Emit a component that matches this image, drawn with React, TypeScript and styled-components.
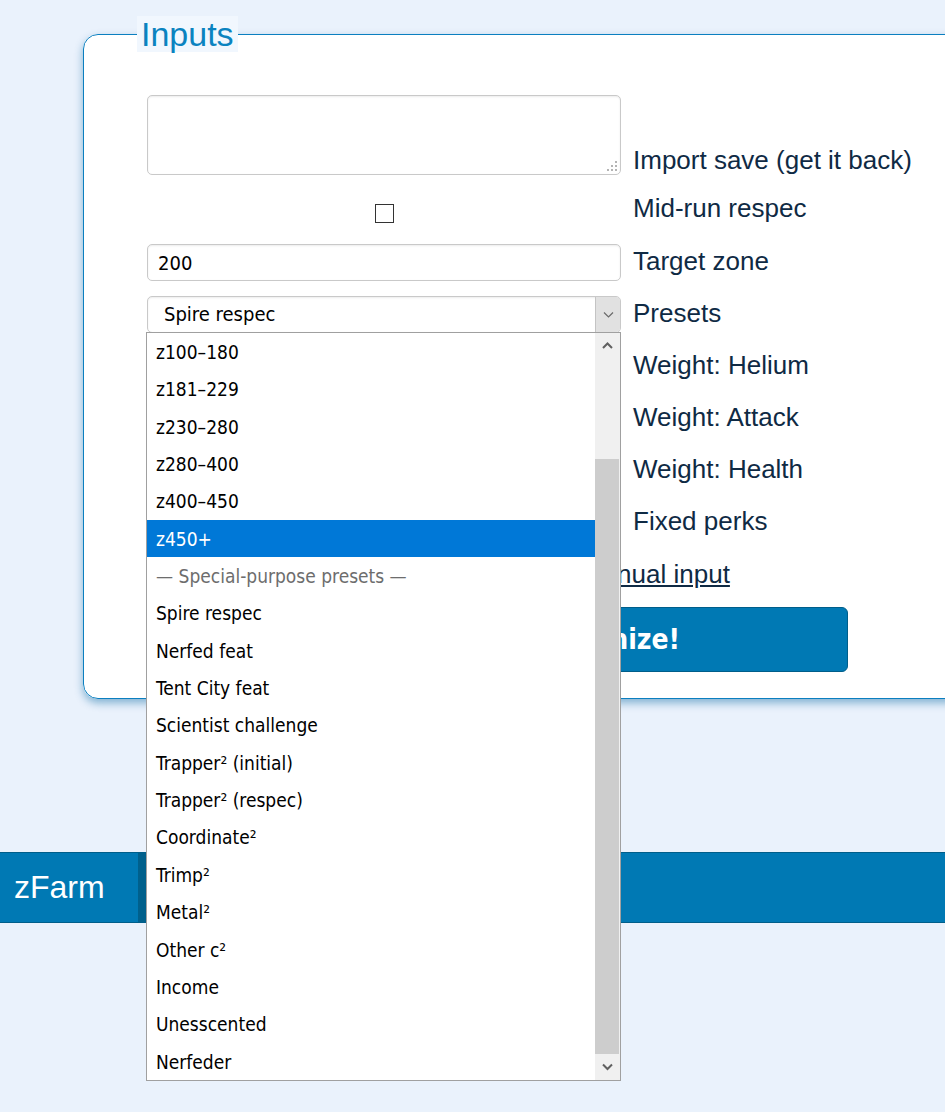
import React from 'react';
import styled, { createGlobalStyle } from 'styled-components';

const GlobalStyle = createGlobalStyle`
  html, body {
    margin: 0;
    padding: 0;
  }
  html {
    overflow: hidden;
  }
  body {
    background: #eaf2fc;
    font-family: "Liberation Sans", Arial, sans-serif;
    color: #0f2a44;
  }
`;

const uiFont = `"DejaVu Sans Condensed", "DejaVu Sans", sans-serif`;

// small square of the textarea's resize grip
const gripDot = (right: number, bottom: number) =>
  `linear-gradient(#b4b4b4, #b4b4b4) no-repeat right ${right}px bottom ${bottom}px / 2px 2px`;

const Page = styled.div`
  min-height: 1112px;
  padding-top: 16px;
  box-sizing: border-box;
`;

const Panel = styled.fieldset`
  margin: 0 0 153px 83px;
  width: 1100px;
  min-width: 0;
  box-sizing: border-box;
  padding: 43px 63px 26px;
  border: 1px solid #0b7fc0;
  border-radius: 15px;
  background: #fff;
  box-shadow: 0 4px 8px rgba(0, 100, 160, 0.45);
`;

const Legend = styled.legend`
  margin-left: -10px;
  padding: 0 4px;
  font-size: 34px;
  line-height: 36px;
  color: #0b83c0;
  background: #f1f7fe;
`;

const Form = styled.div`
  display: grid;
  grid-template-columns: 474px auto;
  column-gap: 12px;
  row-gap: 15px;
  align-items: center;
`;

const FieldLabel = styled.label<{ $bottom?: boolean }>`
  font-size: 26px;
  white-space: nowrap;
  color: #0f2a44;
  line-height: ${(p) => (p.$bottom ? '36px' : '31px')};
  align-self: ${(p) => (p.$bottom ? 'end' : 'center')};
  margin-bottom: ${(p) => (p.$bottom ? '-3px' : '3px')};
`;

const SaveBox = styled.textarea`
  display: block;
  width: 474px;
  height: 80px;
  box-sizing: border-box;
  border: 1px solid #c9c9c9;
  border-radius: 5px;
  box-shadow: inset 0 1px 2px rgba(0, 0, 0, 0.08);
  resize: none;
  background: ${[
    gripDot(3, 3),
    gripDot(7, 3),
    gripDot(11, 3),
    gripDot(3, 7),
    gripDot(7, 7),
    gripDot(3, 11),
  ].join(', ')}, #fff;
`;

const CheckCell = styled.div`
  height: 39px;
  display: flex;
  justify-content: center;
  align-items: flex-start;
`;

const CheckBox = styled.input`
  appearance: none;
  margin: 14px 0 0;
  width: 19px;
  height: 19px;
  box-sizing: border-box;
  border: 1px solid #333;
  background: #fff;
`;

const TextField = styled.input`
  display: block;
  width: 474px;
  height: 37px;
  box-sizing: border-box;
  padding: 0 10px;
  border: 1px solid #c9c9c9;
  border-radius: 5px;
  box-shadow: inset 0 1px 2px rgba(0, 0, 0, 0.08);
  font-family: ${uiFont};
  font-stretch: condensed;
  font-size: 20px;
  color: #000;
`;

const SelectCell = styled.div`
  position: relative;
`;

const SelectShell = styled.div`
  display: flex;
  height: 37px;
  box-sizing: border-box;
  border: 1px solid #c9c9c9;
  border-radius: 5px;
  overflow: hidden;
  background: #fff;
  box-shadow: inset 0 1px 2px rgba(0, 0, 0, 0.08);
`;

const SelectValue = styled.div`
  flex: 1;
  padding-left: 16px;
  font-family: ${uiFont};
  font-stretch: condensed;
  font-size: 20px;
  line-height: 35px;
  color: #000;
`;

const SelectArrow = styled.div`
  width: 24px;
  background: #e1e1e1;
  border-left: 1px solid #c4c4c4;
  display: flex;
  align-items: center;
  justify-content: center;
`;

const Popup = styled.div`
  position: absolute;
  top: calc(100% - 1px);
  left: -1px;
  width: 475px;
  box-sizing: border-box;
  border: 1px solid #a0a0a0;
  background: #fff;
  display: flex;
  z-index: 10;
`;

const OptionList = styled.div`
  flex: 1;
`;

const Option = styled.div<{ $selected?: boolean; $group?: boolean }>`
  height: 37.35px;
  line-height: 39px;
  padding-left: 9px;
  font-family: ${uiFont};
  font-stretch: condensed;
  font-size: 19px;
  white-space: nowrap;
  overflow: hidden;
  color: ${(p) => (p.$selected ? '#fff' : p.$group ? '#6d6d6d' : '#000')};
  background: ${(p) => (p.$selected ? '#0078d7' : 'transparent')};
`;

const ScrollBar = styled.div`
  width: 25px;
  display: flex;
  flex-direction: column;
  background: #f0f0f0;
`;

const ScrollCap = styled.div`
  height: 26px;
  display: flex;
  align-items: center;
  justify-content: center;
`;

const ScrollTrack = styled.div`
  flex: 1;
  display: flex;
  flex-direction: column;
  padding-top: 100px;
`;

const ScrollThumb = styled.div`
  flex: 1;
  background: #cdcdcd;
  margin-right: 1px;
`;

const ManualLink = styled.a`
  grid-column: 1 / -1;
  justify-self: start;
  margin-left: 434px;
  font-size: 26px;
  line-height: 36px;
  color: #0f2a44;
  text-decoration: underline;
`;

const OptimizeButton = styled.button`
  grid-column: 1 / -1;
  justify-self: start;
  margin-left: 227px;
  width: 474px;
  height: 65px;
  border: 1px solid #005e8a;
  border-radius: 6px;
  background: #0079b4;
  color: #fff;
  font-family: ${uiFont};
  font-stretch: condensed;
  font-weight: bold;
  font-size: 28px;
`;

const TabBar = styled.nav`
  display: flex;
  height: 69px;
  background: #0079b4;
  border-top: 1px solid #005e8a;
  border-bottom: 1px solid #005e8a;
`;

const Tab = styled.div`
  padding: 0 33px 0 14px;
  border-right: 9px solid #00608c;
  font-size: 32px;
  line-height: 69px;
  color: #fff;
`;

const presets = [
  'z100–180',
  'z181–229',
  'z230–280',
  'z280–400',
  'z400–450',
  'z450+',
  '— Special-purpose presets —',
  'Spire respec',
  'Nerfed feat',
  'Tent City feat',
  'Scientist challenge',
  'Trapper² (initial)',
  'Trapper² (respec)',
  'Coordinate²',
  'Trimp²',
  'Metal²',
  'Other c²',
  'Income',
  'Unesscented',
  'Nerfeder',
];

const weights = [
  { label: 'Weight: Helium', value: '1' },
  { label: 'Weight: Attack', value: '5' },
  { label: 'Weight: Health', value: '0.5' },
  { label: 'Fixed perks', value: '' },
];

function Chevron({ up, thin }: { up?: boolean; thin?: boolean }) {
  const points = up ? '1,6 5.5,1.5 10,6' : '1,1.5 5.5,6 10,1.5';
  return (
    <svg width="11" height="8" viewBox="0 0 11 8">
      <polyline
        points={points}
        fill="none"
        stroke={thin ? '#6a6a6a' : '#606060'}
        strokeWidth={thin ? 1.2 : 2}
      />
    </svg>
  );
}

function App() {
  return (
    <Page>
      <GlobalStyle />
      <Panel>
        <Legend>Inputs</Legend>
        <Form>
          <SaveBox />
          <FieldLabel $bottom>Import save (get it back)</FieldLabel>

          <CheckCell>
            <CheckBox type="checkbox" />
          </CheckCell>
          <FieldLabel>Mid-run respec</FieldLabel>

          <TextField defaultValue="200" />
          <FieldLabel>Target zone</FieldLabel>

          <SelectCell>
            <SelectShell>
              <SelectValue>Spire respec</SelectValue>
              <SelectArrow>
                <Chevron thin />
              </SelectArrow>
            </SelectShell>
            <Popup>
              <OptionList>
                {presets.map((name) => (
                  <Option
                    key={name}
                    $selected={name === 'z450+'}
                    $group={name.startsWith('—')}
                  >
                    {name}
                  </Option>
                ))}
              </OptionList>
              <ScrollBar>
                <ScrollCap>
                  <Chevron up />
                </ScrollCap>
                <ScrollTrack>
                  <ScrollThumb />
                </ScrollTrack>
                <ScrollCap>
                  <Chevron />
                </ScrollCap>
              </ScrollBar>
            </Popup>
          </SelectCell>
          <FieldLabel>Presets</FieldLabel>

          {weights.map((w) => (
            <React.Fragment key={w.label}>
              <TextField defaultValue={w.value} />
              <FieldLabel>{w.label}</FieldLabel>
            </React.Fragment>
          ))}

          <ManualLink href="#">Manual input</ManualLink>
          <OptimizeButton>Optimize!</OptimizeButton>
        </Form>
      </Panel>

      <TabBar>
        <Tab>zFarm</Tab>
      </TabBar>
    </Page>
  );
}

export default App;
